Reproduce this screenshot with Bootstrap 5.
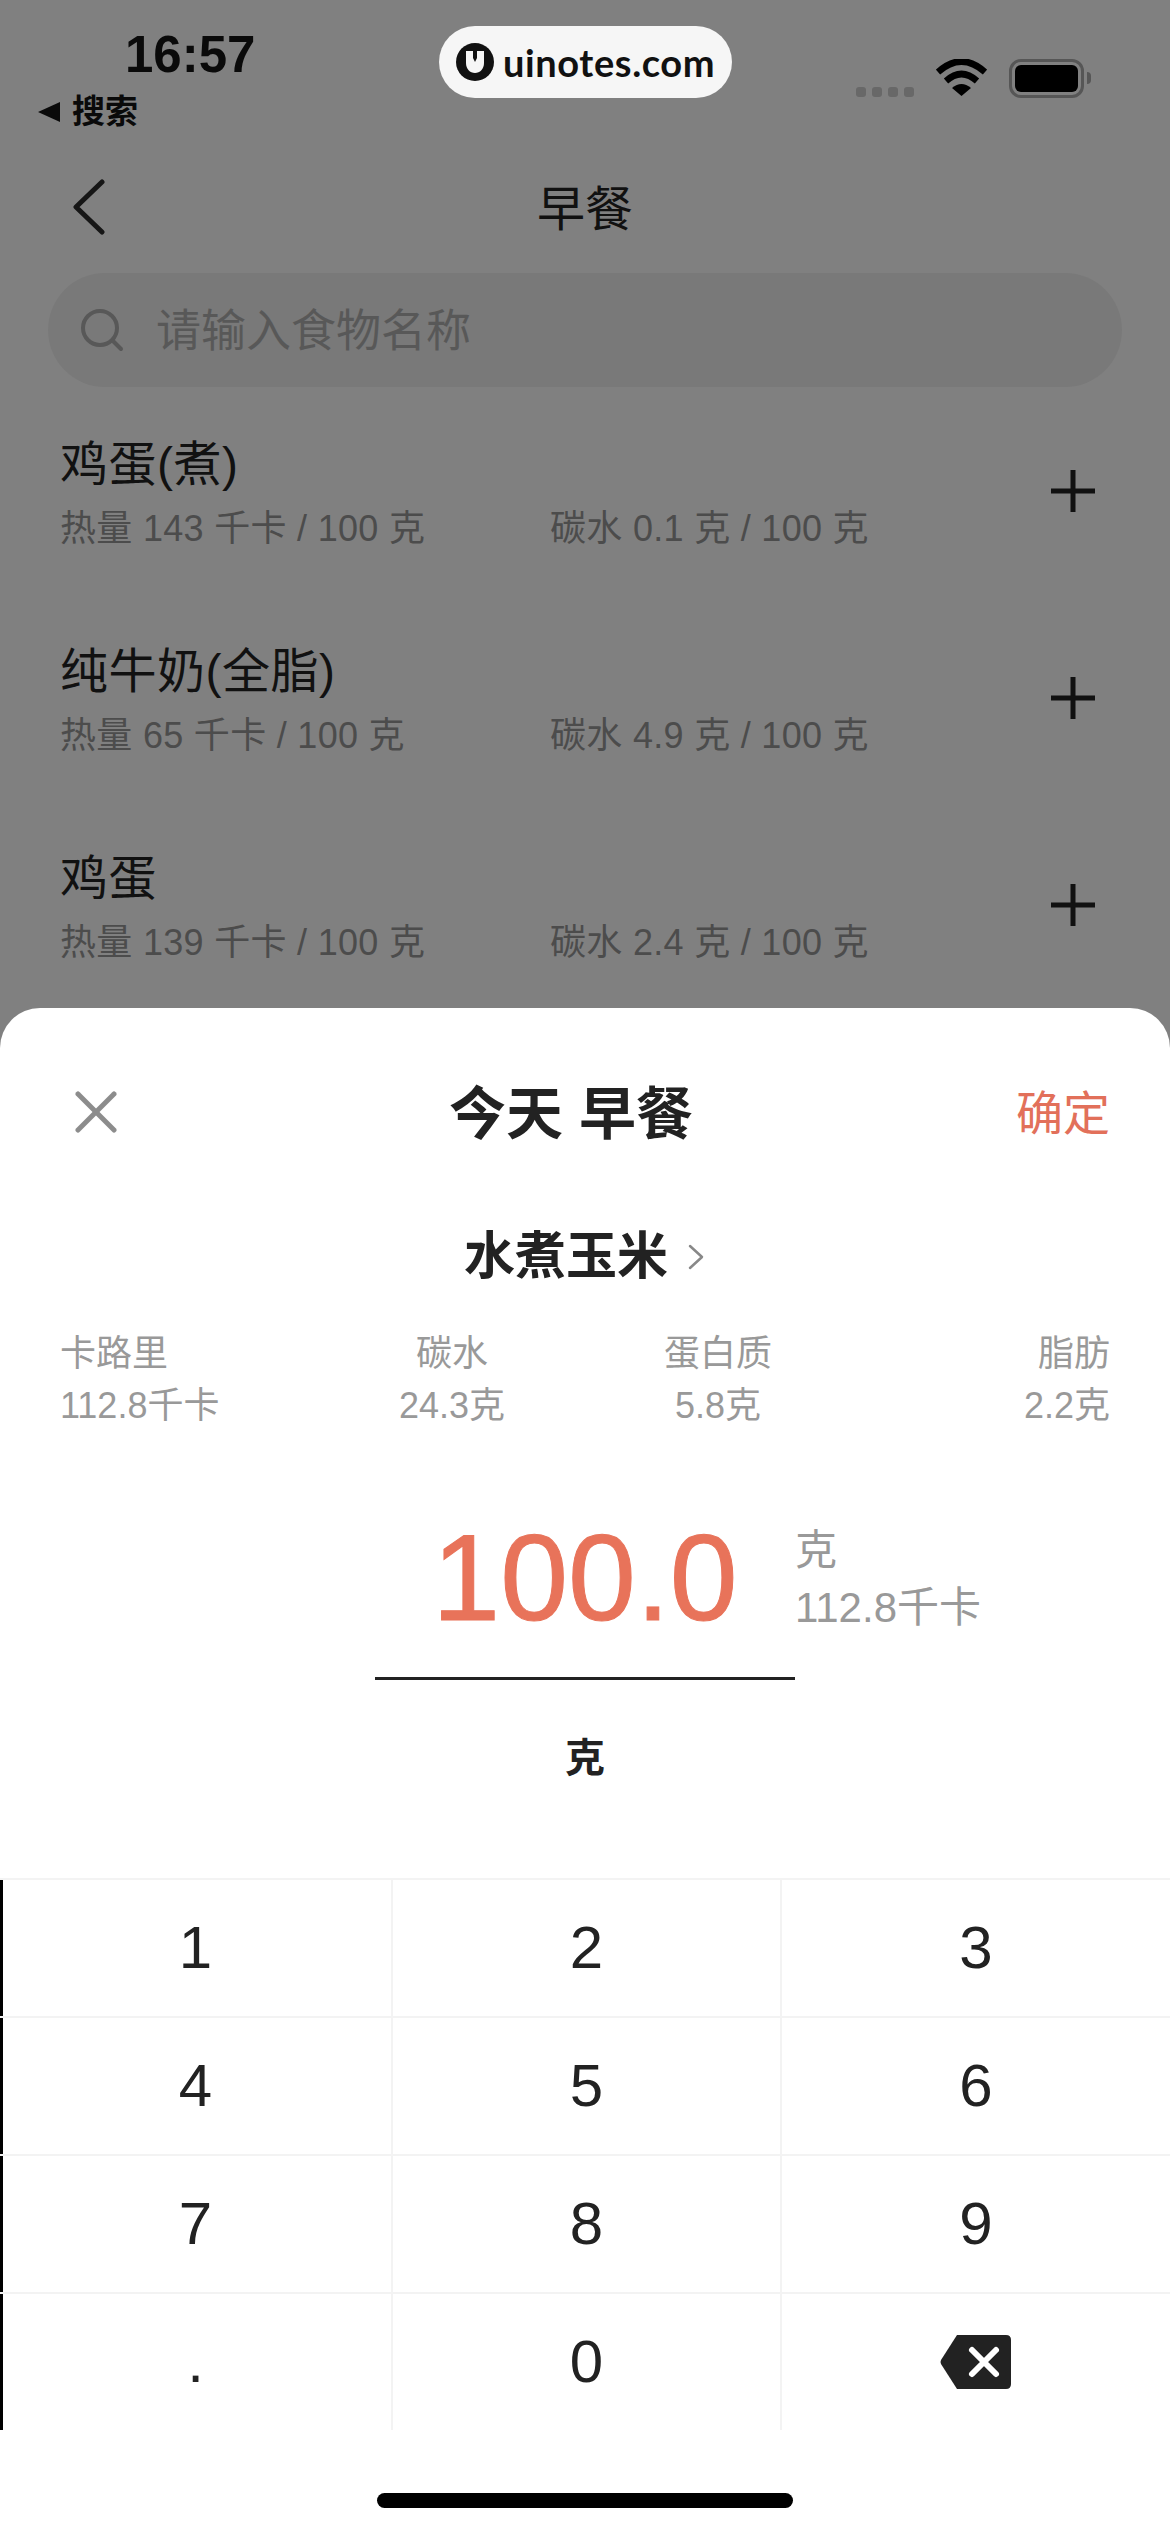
<!DOCTYPE html>
<html lang="zh">
<head>
  <meta charset="UTF-8">
  <meta name="viewport" content="width=device-width, initial-scale=1.0">
  <title>早餐</title>
  <link href="https://cdn.jsdelivr.net/npm/bootstrap@5.3.3/dist/css/bootstrap.min.css" rel="stylesheet">
  <style>
    body { background: #fff; font-family: "Liberation Sans", "Noto Sans CJK SC", sans-serif; }
    .screen { width: 1170px; height: 2532px; overflow: hidden; }

    /* dimmed page behind the sheet */
    .dim-area { height: 1048px; margin-bottom: -40px; background: #808080; color: #111; }
    .status-row { height: 150px; padding: 30px 79px 0 38px; }
    .status-time { margin-left: 87px; font-size: 51px; line-height: 50px; font-weight: 700; color: #0a0a0a; }
    .status-back { margin-top: 12px; font-size: 33px; line-height: 40px; font-weight: 700; color: #0a0a0a; gap: 12px; }
    .status-icons { padding-top: 29px; }
    .signal-dots { gap: 6px; margin-right: 22px; margin-top: 28px; }
    .signal-dots i { display: block; width: 10px; height: 10px; border-radius: 3px; background: #686868; }
    .battery-box { width: 75px; height: 39px; margin-left: 22px; padding: 3px; border: 3px solid #565656; border-radius: 12px; }
    .battery-box i { display: block; height: 100%; background: #000; border-radius: 6px; }
    .battery-nub { width: 4px; height: 12px; margin: 13px 0 0 3px; background: #565656; border-radius: 0 6px 6px 0; }

    .logo-pill { left: 439px; top: 26px; width: 293px; height: 72px; padding-left: 17px; gap: 9px; background: #f6f6f6; border-radius: 36px;
      font-family: Lato, sans-serif; font-size: 38px; font-weight: 700; letter-spacing: .6px; color: #111; }

    .nav-row { height: 114px; padding-left: 73px; }
    .nav-title { left: 0; right: 0; padding-top: 3px; font-size: 48px; line-height: 114px; text-align: center; }

    .search-box { height: 114px; margin: 9px 48px 0; padding: 4px 0 0 32px; gap: 32px; background: #797979; border-radius: 57px; font-size: 45px; color: #585858; }
    .search-box svg { margin-top: -4px; }

    .food-row { height: 207px; padding: 48px 75px 0 60px; }
    .food-name { font-size: 48px; line-height: 60px; letter-spacing: .5px; }
    .food-meta { margin-top: 12px; font-size: 36px; line-height: 44px; letter-spacing: .3px; color: #4c4c4c; white-space: pre; }
    .food-meta span { width: 490px; }
    .plus-icon { margin-top: 34px; }

    /* bottom sheet */
    .sheet { background: #fff; border-radius: 40px 40px 0 0; color: #222; }
    .sheet-head { padding: 71px 60px 0 75px; height: 141px; }
    .sheet-close { width: 51px; }
    .sheet-title { font-size: 57px; line-height: 70px; font-weight: 700; }
    .sheet-ok { font-size: 47px; line-height: 70px; color: #e2705a; }
    .picked-food { margin-top: 73px; height: 70px; gap: 20px; padding-right: 2px; font-size: 51px; line-height: 70px; font-weight: 700; }
    .nutrient-row { margin-top: 36px; padding: 0 60px; font-size: 36px; line-height: 52px; color: #999; white-space: nowrap; }
    .nutrient-a { width: 337px; }
    .nutrient-b { width: 110px; }
    .nutrient-c { width: 110px; margin-left: 156px; }

    .amount-box { width: 420px; height: 248px; margin-left: 375px; padding-top: 86px; border-bottom: 3px solid #222; font-size: 122px; line-height: 120px; color: #e8735a; text-align: center; -webkit-text-stroke: 1px #e8735a; }
    .amount-side { padding-top: 90px; font-size: 42px; line-height: 57px; color: #999; }
    .unit-label { margin-top: 48px; font-size: 40px; line-height: 60px; font-weight: 700; text-align: center; }

    .key-grid { display: grid; grid-template-columns: 393px 389px 388px; margin-top: 90px; }
    .key-cell { height: 138px; border-top: 2px solid #f3f3f3; border-right: 2px solid #f3f3f3; font-size: 60px; color: #222; }
    .key-cell:nth-child(3n) { border-right: 0; }
    .key-cell:nth-child(3n+1) { box-shadow: inset 3px 0 0 #000; }
    .home-bar { width: 416px; height: 15px; margin: 63px auto 0; background: #000; border-radius: 8px; }
  </style>
</head>
<body>
<div class="screen position-relative">

  <!-- 背后的食物列表 -->
  <div class="dim-area">
    <div class="status-row d-flex justify-content-between">
      <div>
        <div class="status-time">16:57</div>
        <div class="status-back d-flex align-items-center">
          <svg width="22" height="20" viewBox="0 0 22 20"><polygon points="0,10 22,0 22,20" fill="#0a0a0a"/></svg>
          <span>搜索</span>
        </div>
      </div>
      <div class="status-icons d-flex align-items-start">
        <div class="signal-dots d-flex"><i></i><i></i><i></i><i></i></div>
        <svg width="51" height="37" viewBox="0 0 51 37" fill="none" stroke="#000" stroke-width="6.5">
          <path d="M2 13 Q25.5 -8 49 13"/>
          <path d="M10 22 Q25.5 8 41 22"/>
          <path d="M16 29 Q25.5 21 35 29 L25.5 37 Z" fill="#000" stroke="none"/>
        </svg>
        <div class="battery-box"><i></i></div>
        <div class="battery-nub"></div>
      </div>
    </div>

    <div class="nav-row position-relative d-flex align-items-center">
      <svg width="32" height="56" viewBox="0 0 32 56" fill="none" stroke="#161616" stroke-width="5" stroke-linecap="round" stroke-linejoin="round">
        <polyline points="29,3 3,28 29,53"/>
      </svg>
      <div class="nav-title position-absolute top-0">早餐</div>
    </div>

    <div class="search-box d-flex align-items-center">
      <svg width="44" height="44" viewBox="0 0 44 44" fill="none" stroke="#585858" stroke-width="4" stroke-linecap="round">
        <circle cx="20" cy="20" r="17"/>
        <line x1="33" y1="33" x2="41" y2="41"/>
      </svg>
      <span>请输入食物名称</span>
    </div>

    <div class="food-row d-flex justify-content-between align-items-start">
      <div>
        <div class="food-name">鸡蛋(煮)</div>
        <div class="food-meta d-flex"><span>热量 143 千卡 / 100 克</span><div>碳水 0.1 克 / 100 克</div></div>
      </div>
      <svg class="plus-icon" width="44" height="44" viewBox="0 0 44 44" stroke="#111" stroke-width="5"><line x1="22" y1="1" x2="22" y2="43"/><line x1="0" y1="22" x2="44" y2="22"/></svg>
    </div>
    <div class="food-row d-flex justify-content-between align-items-start">
      <div>
        <div class="food-name">纯牛奶(全脂)</div>
        <div class="food-meta d-flex"><span>热量 65 千卡 / 100 克</span><div>碳水 4.9 克 / 100 克</div></div>
      </div>
      <svg class="plus-icon" width="44" height="44" viewBox="0 0 44 44" stroke="#111" stroke-width="5"><line x1="22" y1="1" x2="22" y2="43"/><line x1="0" y1="22" x2="44" y2="22"/></svg>
    </div>
    <div class="food-row d-flex justify-content-between align-items-start">
      <div>
        <div class="food-name">鸡蛋</div>
        <div class="food-meta d-flex"><span>热量 139 千卡 / 100 克</span><div>碳水 2.4 克 / 100 克</div></div>
      </div>
      <svg class="plus-icon" width="44" height="44" viewBox="0 0 44 44" stroke="#111" stroke-width="5"><line x1="22" y1="1" x2="22" y2="43"/><line x1="0" y1="22" x2="44" y2="22"/></svg>
    </div>
  </div>

  <!-- 水印 -->
  <div class="logo-pill position-absolute d-flex align-items-center">
    <svg width="38" height="40" viewBox="0 0 38 40">
      <circle cx="19" cy="20" r="19" fill="#111"/>
      <path d="M10 9 H17 V16 L19 20 L21 16 V9 H28 V21 C28 27 24 31 19 31 C14 31 10 27 10 21 Z" fill="#f6f6f6"/>
    </svg>
    <span>uinotes.com</span>
  </div>

  <!-- 底部弹层 -->
  <div class="sheet position-relative">
    <div class="sheet-head d-flex justify-content-between align-items-start">
      <div class="sheet-close pt-2 mt-1">
        <svg width="42" height="42" viewBox="0 0 42 42" stroke="#8c8c8c" stroke-width="5" stroke-linecap="round"><line x1="3" y1="3" x2="39" y2="39"/><line x1="39" y1="3" x2="3" y2="39"/></svg>
      </div>
      <div class="sheet-title">今天 早餐</div>
      <div class="sheet-ok">确定</div>
    </div>

    <div class="picked-food d-flex justify-content-center align-items-center">
      <span>水煮玉米</span>
      <svg width="16" height="26" viewBox="0 0 16 26" fill="none" stroke="#888" stroke-width="2.5" stroke-linecap="round" stroke-linejoin="round"><polyline points="2,2 14,13 2,24"/></svg>
    </div>

    <div class="nutrient-row d-flex">
      <div class="nutrient-a">卡路里<br>112.8千卡</div>
      <div class="nutrient-b text-center">碳水<br>24.3克</div>
      <div class="nutrient-c text-center">蛋白质<br>5.8克</div>
      <div class="flex-grow-1 text-end">脂肪<br>2.2克</div>
    </div>

    <div class="d-flex">
      <div class="amount-box">100.0</div>
      <div class="amount-side">克<br>112.8千卡</div>
    </div>
    <div class="unit-label">克</div>

    <div class="key-grid">
      <div class="key-cell d-flex align-items-center justify-content-center">1</div>
      <div class="key-cell d-flex align-items-center justify-content-center">2</div>
      <div class="key-cell d-flex align-items-center justify-content-center">3</div>
      <div class="key-cell d-flex align-items-center justify-content-center">4</div>
      <div class="key-cell d-flex align-items-center justify-content-center">5</div>
      <div class="key-cell d-flex align-items-center justify-content-center">6</div>
      <div class="key-cell d-flex align-items-center justify-content-center">7</div>
      <div class="key-cell d-flex align-items-center justify-content-center">8</div>
      <div class="key-cell d-flex align-items-center justify-content-center">9</div>
      <div class="key-cell d-flex align-items-center justify-content-center">.</div>
      <div class="key-cell d-flex align-items-center justify-content-center">0</div>
      <div class="key-cell d-flex align-items-center justify-content-center">
        <svg width="72" height="54" viewBox="0 0 72 54">
          <path d="M17 0 H66 Q71 0 71 5 V49 Q71 54 66 54 H17 L1 29 Q0 27 1 25 Z" fill="#222"/>
          <path d="M32 15 L56 39 M56 15 L32 39" stroke="#fff" stroke-width="6" stroke-linecap="round"/>
        </svg>
      </div>
    </div>
    <div class="home-bar"></div>
  </div>
</div>
<script src="https://cdn.jsdelivr.net/npm/bootstrap@5.3.3/dist/js/bootstrap.bundle.min.js"></script>
</body>
</html>
